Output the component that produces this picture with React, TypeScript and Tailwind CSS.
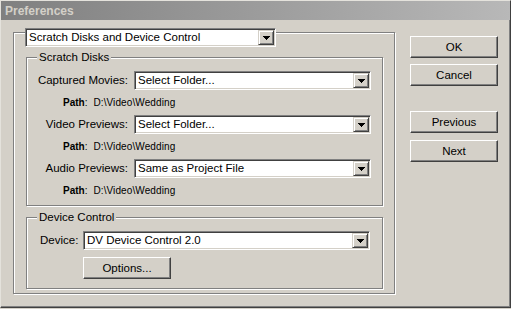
import React from 'react';

const raised =
  'border border-t-white border-l-white border-r-[#404040] border-b-[#404040] bg-[#d4d0c8] shadow-[inset_-1px_-1px_0_#808080]';

function DropArrow() {
  return (
    <span className="flex h-full w-[16px] shrink-0 items-center justify-center border border-t-[#d4d0c8] border-l-[#d4d0c8] border-r-[#404040] border-b-[#404040] bg-[#d4d0c8] shadow-[inset_1px_1px_0_#fff,inset_-1px_-1px_0_#808080]">
      <svg width="7" height="4" viewBox="0 0 7 4" shapeRendering="crispEdges">
        <path d="M0 0H7V1H6V2H5V3H4V4H3V3H2V2H1V1H0Z" fill="#000" />
      </svg>
    </span>
  );
}

function Select({ value, className = '' }: { value: string; className?: string }) {
  return (
    <div
      className={`flex h-[19px] border border-t-[#808080] border-l-[#808080] border-r-white border-b-white bg-white p-[1px] shadow-[inset_1px_1px_0_#404040,inset_-1px_-1px_0_#d4d0c8] ${className}`}
    >
      <span className="flex-1 truncate pl-[2px] leading-[15px]">{value}</span>
      <DropArrow />
    </div>
  );
}

function Btn({ label, className = '' }: { label: string; className?: string }) {
  return (
    <button className={`block h-[22px] w-[88px] text-center leading-[18px] ${raised} ${className}`}>
      {label}
    </button>
  );
}

function Group({
  title,
  className = '',
  children,
}: {
  title: string;
  className?: string;
  children: React.ReactNode;
}) {
  return (
    <div className={`border border-[#808080] shadow-[1px_1px_0_#fff,inset_1px_1px_0_#fff] ${className}`}>
      <div className="-mt-[8px] ml-[10px] w-fit bg-[#d4d0c8] px-[2px] leading-[14px]">{title}</div>
      {children}
    </div>
  );
}

function DiskRow({ label, value, first }: { label: string; value: string; first?: boolean }) {
  return (
    <div className={first ? 'mt-[7px]' : ''}>
      <div className="flex items-center">
        <span className="w-[101px] text-right">{label}</span>
        <Select value={value} className="ml-[6px] w-[237px]" />
      </div>
      <div className="flex h-[25px] pl-[36px] pt-[6px] text-[10px] leading-[14px]">
        <span className="font-bold">Path</span>
        <span>:</span>
        <span className="ml-[6px] tracking-[0.1px]">D:\Video\Wedding</span>
      </div>
    </div>
  );
}

export default function App() {
  return (
    <div className="h-[309px] w-[511px] bg-[#d4d0c8] font-['Liberation_Sans',Arial,sans-serif] text-[11.5px] text-black">
      <div className="h-[308px] w-[511px] border-t border-l border-r border-b border-t-[#e4e2dc] border-l-[#e4e2dc] border-r-[#404040] border-b-[#404040] shadow-[inset_-1px_-1px_0_#808080]">
        <div className="flex h-[19px] items-center bg-linear-to-r from-[#808080] to-[#b8b8b8] pl-[4px] text-[12px] font-bold text-[#d4d0c8]">
          Preferences
        </div>

        <div className="flex pl-[12px] pt-[8px]">
          <div>
            <Select
              value="Scratch Disks and Device Control"
              className="relative z-10 ml-[12px] w-[251px]"
            />
            <div className="-mt-[15px] h-[262px] w-[382px] border border-[#808080] shadow-[1px_1px_0_#fff,inset_1px_1px_0_#fff]">
              <Group title="Scratch Disks" className="ml-[12px] mt-[24px] h-[149px] w-[357px]">
                <DiskRow label="Captured Movies:" value="Select Folder..." first />
                <DiskRow label="Video Previews:" value="Select Folder..." />
                <DiskRow label="Audio Previews:" value="Same as Project File" />
              </Group>

              <Group title="Device Control" className="ml-[12px] mt-[11px] h-[72px] w-[357px]">
                <div className="mt-[7px] flex items-center pl-[13px]">
                  <span className="w-[43px]">Device:</span>
                  <Select value="DV Device Control 2.0" className="w-[287px]" />
                </div>
                <Btn label="Options..." className="ml-[56px] mt-[7px]" />
              </Group>
            </div>
          </div>

          <div className="ml-[15px] mt-[8px]">
            <Btn label="OK" />
            <Btn label="Cancel" className="mt-[6px]" />
            <Btn label="Previous" className="mt-[25px]" />
            <Btn label="Next" className="mt-[7px]" />
          </div>
        </div>
      </div>
    </div>
  );
}
